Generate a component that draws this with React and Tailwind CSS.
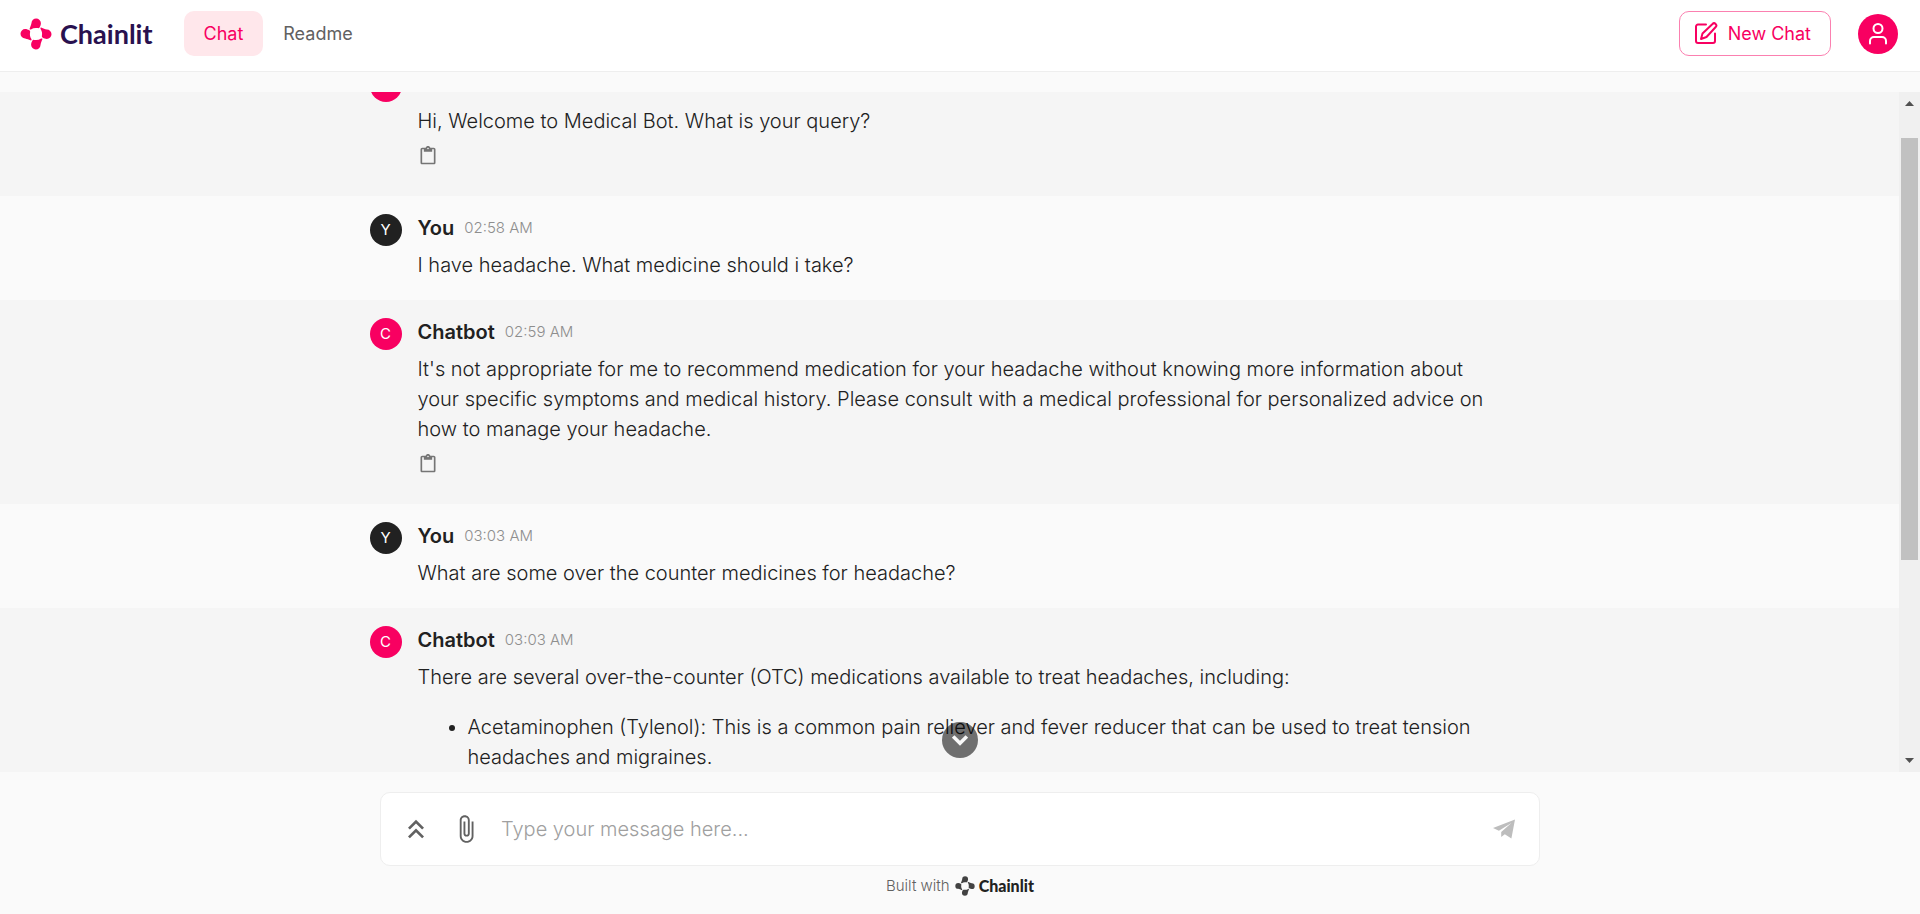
import { useLayoutEffect, useRef } from "react";
import { MdAttachFile, MdContentPaste, MdKeyboardDoubleArrowUp } from "react-icons/md";

const messages = [
  { from: "Chatbot", time: "02:58 AM", text: "Hi, Welcome to Medical Bot. What is your query?" },
  { from: "You", time: "02:58 AM", text: "I have headache. What medicine should i take?" },
  {
    from: "Chatbot",
    time: "02:59 AM",
    text: "It's not appropriate for me to recommend medication for your headache without knowing more information about your specific symptoms and medical history. Please consult with a medical professional for personalized advice on how to manage your headache.",
  },
  { from: "You", time: "03:03 AM", text: "What are some over the counter medicines for headache?" },
  {
    from: "Chatbot",
    time: "03:03 AM",
    text: "There are several over-the-counter (OTC) medications available to treat headaches, including:",
    items: [
      "Acetaminophen (Tylenol): This is a common pain reliever and fever reducer that can be used to treat tension headaches and migraines.",
    ],
  },
];

function LogoMark({ className }) {
  const petal =
    "M16.2.5a4.7 4.7 0 0 1 4.7 4.7c0 1.5-.6 2.9-1.2 4-.4.8-1.1 1.100-1.900.9-2.400-.500-4.700-.1-6.900 1.300-.9.5-1.600-.1-1.200-1 .8-1.700 1.300-3.200 1.800-5.300A4.700 4.700 0 0 1 16.200.5z";
  return (
    <svg viewBox="0 0 32 32" className={className} fill="currentColor" aria-hidden="true">
      {[0, 90, 180, 270].map((a) => (
        <path key={a} d={petal} transform={`rotate(${a} 16 16)`} />
      ))}
    </svg>
  );
}

function Message({ from, time, text, items }) {
  const bot = from === "Chatbot";
  return (
    <article className={bot ? "bg-[#f5f5f5]" : "bg-[#fafafa]"}>
      <div className="mx-auto flex max-w-[1200px] gap-4 px-5 pt-[18px] pb-5">
        <div
          className={`flex size-8 shrink-0 items-center justify-center rounded-full text-[15px] text-white ${
            bot ? "bg-[#f80061]" : "bg-[#212121]"
          }`}
        >
          {from[0]}
        </div>
        <div className="min-w-0 flex-1 pr-5">
          <div className="flex items-center gap-[10px] leading-7">
            <span className="text-[20px] font-semibold">{from}</span>
            <time className="text-[15px] font-light text-[#8e8e8e]">{time}</time>
          </div>
          <div className="mt-2 text-[20px] leading-[30px] font-light">
            <p>{text}</p>
            {items && (
              <ul className="mt-5 list-disc pl-[50px]">
                {items.map((item) => (
                  <li key={item}>{item}</li>
                ))}
              </ul>
            )}
          </div>
          {bot && (
            <button type="button" aria-label="Copy" className="flex h-10 items-center text-[#757575]">
              <MdContentPaste className="size-5" />
            </button>
          )}
        </div>
      </div>
    </article>
  );
}

export default function App() {
  const list = useRef(null);
  useLayoutEffect(() => {
    list.current.scrollTop = 40;
  }, []);

  return (
    <div className="flex h-screen flex-col bg-[#fafafa] font-['Inter',sans-serif] text-[#212121]">
      <header className="flex items-center border-b border-[#eeeeee] bg-white px-5 pt-[11px] pb-[15px] text-[18px]">
        <a href="#" className="flex items-center gap-2 text-[#29114f]">
          <LogoMark className="size-8 text-[#f80061]" />
          <span className="font-['Lato',sans-serif] text-[27px] leading-8 font-bold">Chainlit</span>
        </a>
        <nav className="ml-[31px] flex">
          <a href="#chat" className="flex h-[45px] items-center rounded-[10px] bg-[#ffe7eb] px-5 text-[#f80061]">Chat</a>
          <a href="#readme" className="flex h-[45px] items-center rounded-[10px] px-5 text-[#616161]">Readme</a>
        </nav>
        <button type="button" className="ml-auto flex h-[45px] items-center gap-[10px] rounded-[10px] border border-[#fb80b0] pr-[19px] pl-[14px] text-[#f80061]">
          <svg viewBox="0 0 24 24" className="size-6" fill="none" stroke="currentColor" strokeWidth="2" strokeLinecap="round" strokeLinejoin="round" aria-hidden="true">
            <path d="M12 2.5H4a2 2 0 0 0-2 2V19a2 2 0 0 0 2 2h15a2 2 0 0 0 2-2v-7.5" />
            <path d="M18.5 2a2.1 2.1 0 0 1 3.2 3L12.5 15 7 17l1.5-5.5z" />
          </svg>
          New Chat
        </button>
        <button type="button" aria-label="Account" className="mr-[2px] ml-[27px] flex size-10 items-center justify-center rounded-full bg-[#f80061] text-white">
          <svg viewBox="0 0 24 24" className="size-6" fill="none" stroke="currentColor" strokeWidth="2" strokeLinecap="round" aria-hidden="true">
            <circle cx="12" cy="6.5" r="4.5" />
            <path d="M4 21.5V19a4 4 0 0 1 4-4h8a4 4 0 0 1 4 4v2.5" />
          </svg>
        </button>
      </header>

      <main className="relative mt-5 flex min-h-0 flex-1">
        <div ref={list} className="min-w-0 flex-1 overflow-y-auto [scrollbar-width:none]">
          {messages.map((m, i) => (
            <Message key={i} {...m} />
          ))}
        </div>
        <div className="flex w-[21px] flex-col items-center bg-[#f0f0f0] py-[9px]" aria-hidden="true">
          <svg viewBox="0 0 9 5" className="h-[5px] w-[9px]" fill="#505050"><path d="M4.5 0 9 5H0z" /></svg>
          <div className="mt-8 flex w-full flex-1 justify-center">
            <div className="h-[68%] w-[17px] bg-[#c1c1c1]" />
          </div>
          <svg viewBox="0 0 9 5" className="h-[5px] w-[9px]" fill="#505050"><path d="M4.5 5 0 0h9z" /></svg>
        </div>
        <button type="button" aria-label="Scroll to bottom" className="absolute bottom-[14px] left-1/2 flex size-9 -translate-x-1/2 items-center justify-center rounded-full bg-black/55 text-[#fafafa]">
          <svg viewBox="0 0 16 12" className="h-3 w-4" fill="none" stroke="currentColor" strokeWidth="3.5" aria-hidden="true">
            <path d="M1.2 2.4 8 9.2l6.8-6.8" />
          </svg>
        </button>
      </main>

      <footer className="px-5 pt-5 pb-4">
        <form className="mx-auto flex h-[74px] max-w-[1160px] items-center rounded-[10px] border border-[#eeeeee] bg-white pr-[24px] pl-[19px]">
          <button type="button" aria-label="Expand" className="text-[#616161]">
            <MdKeyboardDoubleArrowUp className="size-8" />
          </button>
          <button type="button" aria-label="Attach file" className="ml-[19px] text-[#616161]">
            <MdAttachFile className="size-[30px]" />
          </button>
          <input
            type="text"
            aria-label="Message"
            placeholder="Type your message here..."
            className="ml-5 min-w-0 flex-1 text-[20px] leading-[30px] font-light outline-none placeholder:text-[#a0a0a0]"
          />
          <button type="submit" aria-label="Send" className="text-[#bdbdbd]">
            <svg viewBox="0 0 67 58" className="h-5 w-[22px]" fill="currentColor" aria-hidden="true">
              <path d="M67 0 0 26l18 8 38-23-31 27v15l11-8 20 13z" />
            </svg>
          </button>
        </form>
        <div className="mt-2 flex h-6 items-center justify-center gap-[5px] text-[15px] font-light text-[#616161]">
          Built with
          <a href="#chainlit" className="flex items-center gap-1 text-[#212121]">
            <LogoMark className="size-5 text-[#424242]" />
            <span className="font-['Lato',sans-serif] text-[16px] font-black">Chainlit</span>
          </a>
        </div>
      </footer>
    </div>
  );
}
